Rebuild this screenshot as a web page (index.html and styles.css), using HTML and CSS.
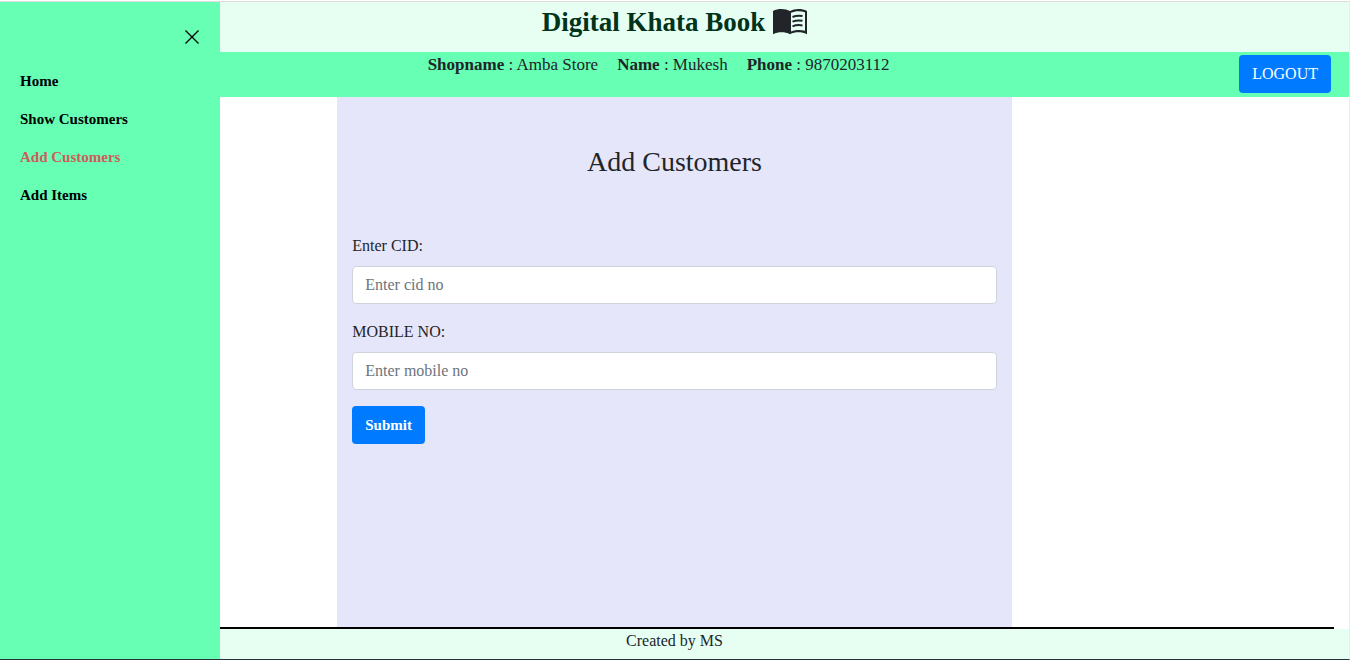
FILE: index.html
```html
<!DOCTYPE html>
<html lang="en">
<head>
<meta charset="utf-8">
<meta name="viewport" content="width=device-width, initial-scale=1">
<title>Digital Khata Book</title>
<link rel="stylesheet" href="styles.css">
</head>
<body>
<div class="page">
  <header class="masthead">
    <h1 class="brand">Digital Khata Book</h1>
    <svg class="book" viewBox="0 0 34 26" aria-hidden="true">
      <path fill="#212529" d="M0 2C2.500.6 5.500 0 8.500 0C11.800 0 14.600.7 17 2C19.400.7 22.200 0 25.500 0C28.500 0 31.500.6 34 2V25.200C31 23.800 28.500 23.300 25.500 23.300C22.500 23.300 19.500 23.900 17 25.200C14.500 23.900 11.500 23.300 8.500 23.300C5.500 23.300 3 23.800 0 25.200Z"/>
      <path fill="#e6fff2" d="M18 3.800C22 1.800 27.500 1.600 32 3.200V21.800C27.500 20.700 22.500 20.900 18 22.600Z"/>
      <path fill="none" stroke="#212529" stroke-width="2" d="M19.500 8C22.500 6.700 26.500 6.500 29.500 7M19.500 12.700C22.500 11.400 26.500 11.200 29.500 11.700M19.500 17.400C22.500 16.100 26.500 15.900 29.500 16.400"/>
    </svg>
  </header>
  <div class="shopbar">
    <p class="shopinfo">
      <span><b>Shopname</b> : Amba Store</span>
      <span><b>Name</b> : Mukesh</span>
      <span><b>Phone</b> : 9870203112</span>
    </p>
    <button class="btn logout" type="button">LOGOUT</button>
  </div>
  <main class="content">
    <form class="panel">
      <h2 class="panel-title">Add Customers</h2>
      <div class="field">
        <label for="cid">Enter CID:</label>
        <input id="cid" type="text" placeholder="Enter cid no">
      </div>
      <div class="field">
        <label for="mobile">MOBILE NO:</label>
        <input id="mobile" type="text" placeholder="Enter mobile no">
      </div>
      <button class="btn submit" type="submit">Submit</button>
    </form>
  </main>
  <div class="rule"></div>
  <footer class="footer">Created by MS</footer>
  <nav class="sidebar">
    <button class="close" type="button" aria-label="Close menu">
      <svg viewBox="0 0 16 16" aria-hidden="true"><path d="M1.500 1.500L14.500 14.500M14.500 1.500L1.500 14.500" stroke="#000" stroke-width="1.300" fill="none"/></svg>
    </button>
    <a href="#">Home</a>
    <a href="#">Show Customers</a>
    <a class="active" href="#" aria-current="page">Add Customers</a>
    <a href="#">Add Items</a>
  </nav>
</div>
</body>
</html>
```

FILE: styles.css
```css
* { box-sizing: border-box; }
body {
  margin: 0;
  padding-top: 1px;
  color: #212529;
  background: #fff;
  font-family: "Liberation Serif", "Times New Roman", serif;
  font-size: 16px;
  line-height: 24px;
}
.page {
  position: relative;
  display: flex;
  flex-direction: column;
  min-height: calc(100vh - 1px);
  border-top: 1px solid #dcdcdc;
  border-right: 1px solid #ececec;
  border-bottom: 1px solid #26323c;
}
.masthead {
  display: flex;
  justify-content: center;
  align-items: flex-start;
  gap: 8px;
  padding: 3px 0 13px;
  background: #e6fff2;
}
.brand {
  margin: 0;
  color: #00331a;
  font-size: 27px;
  line-height: 34px;
}
.book {
  width: 34px;
  height: 26px;
  margin-top: 4px;
}
.shopbar {
  display: flex;
  padding: 3px 18px 4px 78px;
  background: #66ffb3;
}
.shopinfo {
  display: flex;
  flex: 1;
  justify-content: center;
  gap: 19px;
  margin: -2px 0 0;
  font-size: 17px;
}
.btn {
  height: 38px;
  padding: 0 13px;
  border: 0;
  border-radius: 4px;
  color: #fff;
  background: #007bff;
  font-family: inherit;
  font-size: 16px;
  line-height: 24px;
}
.content {
  display: flex;
  flex: 1;
  justify-content: center;
}
.panel {
  width: 50%;
  padding: 48px 15px;
  background: #e6e6fa;
}
.panel-title {
  margin: 0 0 55px;
  font-size: 28px;
  font-weight: 400;
  line-height: 34px;
  text-align: center;
}
.field { margin-bottom: 16px; }
.field label {
  display: block;
  margin-bottom: 8px;
}
.field input {
  display: block;
  width: 100%;
  height: 38px;
  padding: 6px 12px;
  border: 1px solid #ced4da;
  border-radius: 4px;
  background: #fff;
  color: #495057;
  font: inherit;
}
.field input::placeholder {
  color: #6c757d;
  opacity: 1;
}
.submit {
  font-size: 15px;
  font-weight: 700;
}
.rule {
  margin-right: 15px;
  border-top: 2px solid #000;
}
.footer {
  padding-bottom: 6px;
  background: #e6fff2;
  text-align: center;
}
.sidebar {
  position: absolute;
  top: 0;
  bottom: 0;
  left: 0;
  display: flex;
  flex-direction: column;
  gap: 14px;
  width: 220px;
  padding: 27px 20px;
  background: #66ffb3;
}
.sidebar a {
  color: #000;
  font-size: 15px;
  font-weight: 700;
  text-decoration: none;
}
.sidebar .active { color: #cd5c5c; }
.close {
  align-self: flex-end;
  width: 16px;
  height: 16px;
  margin-bottom: 10px;
  padding: 0;
  border: 0;
  background: none;
}
.close svg { display: block; }
```
